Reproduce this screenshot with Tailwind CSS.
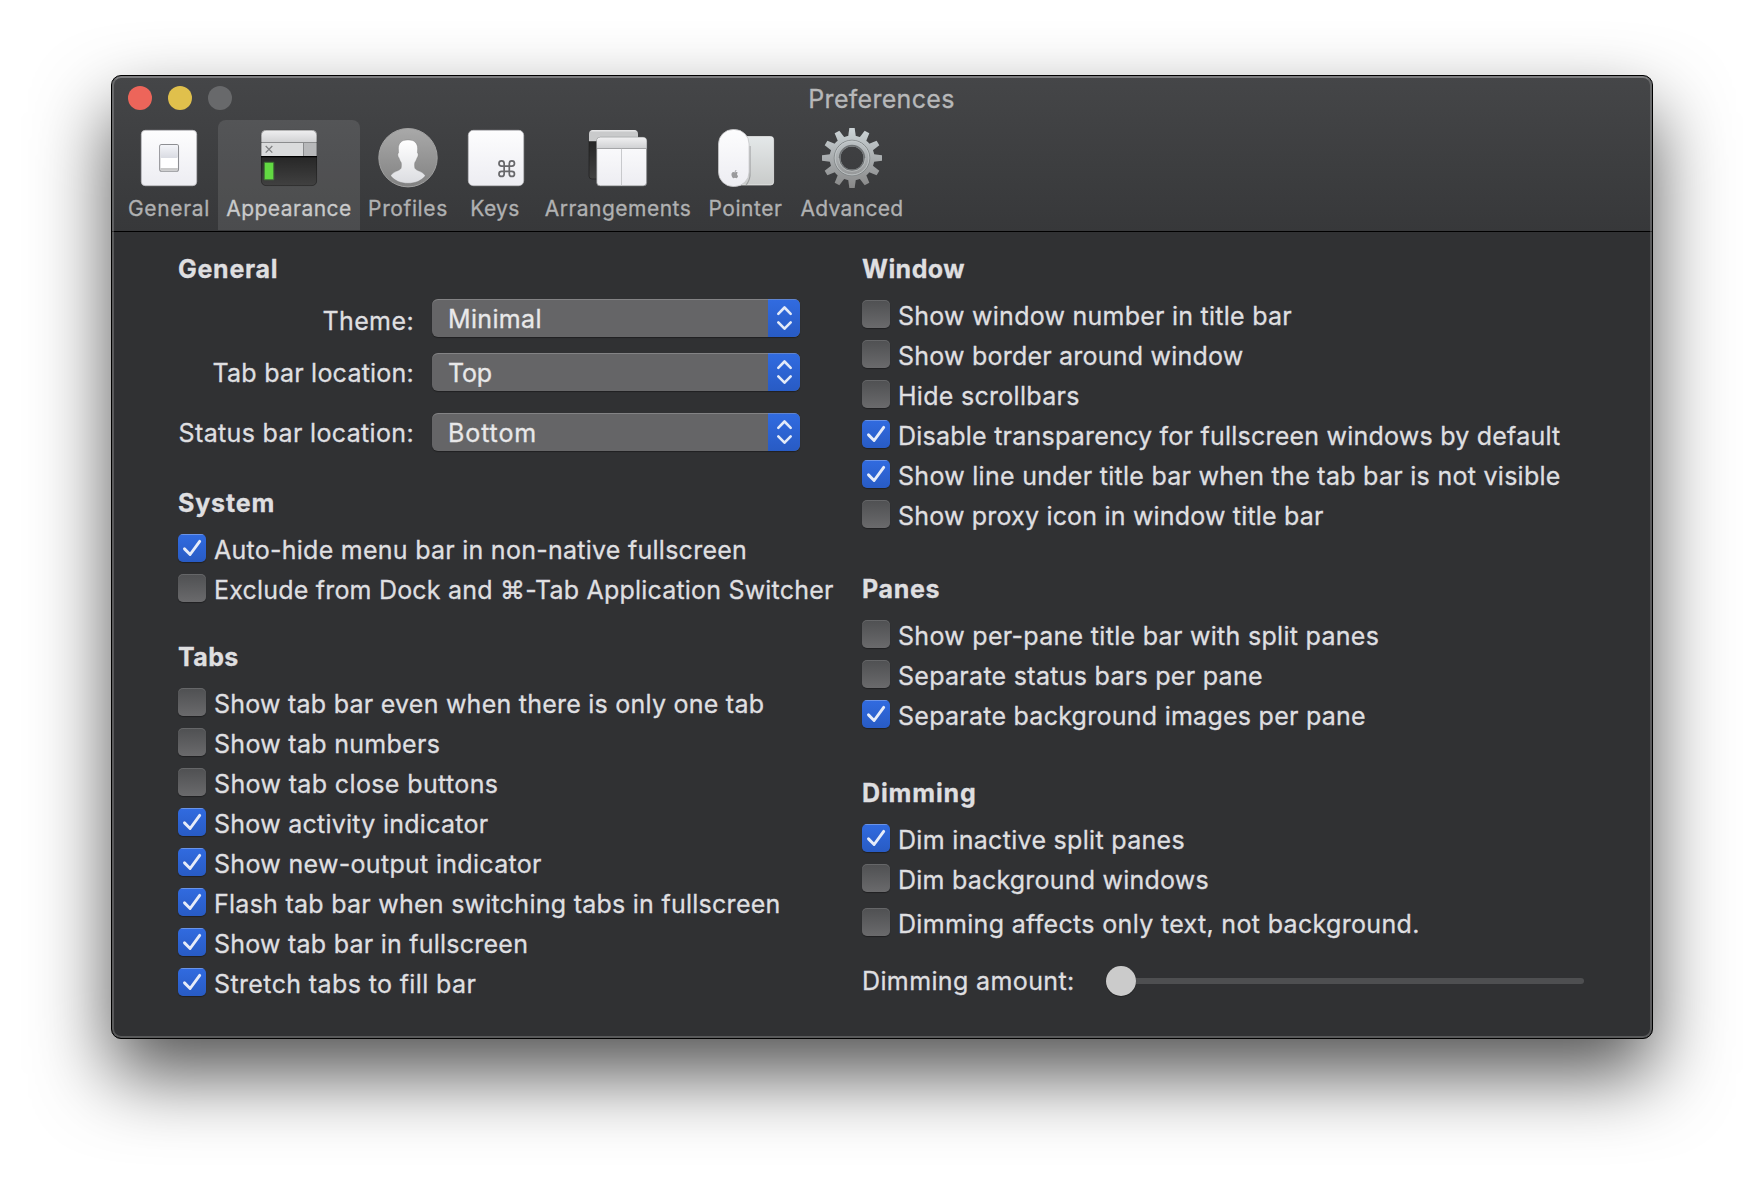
<!DOCTYPE html>
<html lang="en">
<head>
<meta charset="utf-8">
<title>Preferences</title>
<script src="https://cdn.jsdelivr.net/npm/@tailwindcss/browser@4"></script>
</head>
<body class="flex h-[1186px] w-[1764px] items-start overflow-hidden bg-white pt-[75px] pl-[111px] font-[Inter,sans-serif] text-[25px] leading-8 text-[#dfdfe0] [-webkit-text-stroke:0.3px]">

<svg class="hidden">
  <symbol id="on" viewBox="0 0 28 28"><path d="M6.500 14.900l5.600 5.600L21.700 7.300" fill="none" stroke="#e6ecf9" stroke-width="2.900" stroke-linecap="round" stroke-linejoin="round"/></symbol>
  <symbol id="updown" viewBox="0 0 32 38"><path d="M10.300 14.800l6.200-6.300 6.200 6.300M10.300 23.400l6.200 6.300 6.200-6.300" fill="none" stroke="#e3eaf8" stroke-width="2.600" stroke-linecap="round" stroke-linejoin="round"/></symbol>
</svg>

<main class="relative flex h-[964px] w-[1542px] shrink-0 flex-col overflow-hidden rounded-[10px] border border-black bg-[#303133] shadow-[0_36px_76px_rgba(0,0,0,0.67)]">
  <header class="h-[156px] shrink-0 border-b border-black bg-linear-to-b from-[#454648] to-[#37383a]">
    <div class="grid h-11 grid-cols-3 items-center">
      <div class="flex gap-4 pl-4">
        <span class="size-6 rounded-full bg-[#ed655a]"></span>
        <span class="size-6 rounded-full bg-[#e0c04c]"></span>
        <span class="size-6 rounded-full bg-[#68696b]"></span>
      </div>
      <h1 class="-ml-px pt-0.5 text-center tracking-[0.3px] text-[#b7b8b9]">Preferences</h1>
    </div>
    <nav class="flex h-[110px] pl-2 text-[21px] leading-7 whitespace-nowrap text-[#b0b1b2]">
      <div class="flex w-[98px] flex-col items-center gap-[5px] pt-1.5">
        <svg class="size-16 shrink-0" viewBox="0 0 64 64">
          <defs><linearGradient id="plate" x1="0" y1="0" x2="0" y2="1"><stop offset="0" stop-color="#fdfdfe"/><stop offset="1" stop-color="#ededf2"/></linearGradient>
          <linearGradient id="knob" x1="0" y1="0" x2="0" y2="1"><stop offset="0" stop-color="#f4f5f9"/><stop offset="1" stop-color="#d9dbe2"/></linearGradient></defs>
          <rect x="4.300" y="4.300" width="55.400" height="55.400" rx="4" fill="url(#plate)" stroke="#bcbcc0" stroke-width=".7"/>
          <rect x="22.700" y="18.500" width="18.800" height="26.700" rx="2" fill="#fff" stroke="#8d8e92" stroke-width="1.100"/>
          <rect x="23.300" y="19" width="17.600" height="13" rx="1.500" fill="url(#knob)"/>
          <path d="M23.300 42h17.600v1.500a1.200 1.200 0 0 1-1.200 1.200H24.500a1.200 1.200 0 0 1-1.200-1.200z" fill="#c9c9c9"/>
        </svg>
        <span class="tracking-[0.65px]">General</span>
      </div>
      <div class="flex w-[142px] flex-col items-center gap-[5px] rounded-t-lg bg-white/10 pt-1.5 text-[#c9cacb]">
        <svg class="size-16 shrink-0" viewBox="0 0 64 64">
          <defs><linearGradient id="bar" x1="0" y1="0" x2="0" y2="1"><stop offset="0" stop-color="#f0f0f1"/><stop offset="1" stop-color="#d0d1d3"/></linearGradient>
          <linearGradient id="term" x1="0" y1="0" x2="0" y2="1"><stop offset="0" stop-color="#262626"/><stop offset="1" stop-color="#414141"/></linearGradient>
          <clipPath id="win"><rect x="4" y="4" width="56" height="56" rx="5"/></clipPath></defs>
          <g clip-path="url(#win)">
            <path fill="url(#bar)" d="M4 4h56v12.500H4z"/>
            <path fill="#dadbdc" d="M4 16.500h42V30H4z"/>
            <path fill="#b7b8ba" d="M46.500 16.500H60V30H46.500z"/>
            <path fill="#8b8c8e" d="M4 16h56v.9H4zM46 16.500h.9V30H46z"/>
            <path fill="url(#term)" d="M4 30h56v30H4z"/><path fill="#000" d="M4 30h56v1.200H4z"/>
          </g>
          <rect x="4.400" y="4.400" width="55.200" height="55.200" rx="4.600" fill="none" stroke="#000" stroke-opacity=".35" stroke-width=".8"/>
          <path d="M8.700 20l6.600 6.600m0-6.600l-6.600 6.600" stroke="#7f8082" stroke-width="1.300"/>
          <rect x="6.700" y="35.700" width="10.600" height="18.600" rx="1" fill="#54d13a" opacity=".35"/>
          <rect x="7.800" y="36.800" width="8.400" height="16.400" fill="#62d942"/>
        </svg>
        <span class="tracking-[0.47px]">Appearance</span>
      </div>
      <div class="flex w-24 flex-col items-center gap-[5px] pt-1.5">
        <svg class="size-16 shrink-0" viewBox="0 0 64 64">
          <defs><linearGradient id="disc" x1="0" y1="0" x2="0" y2="1"><stop offset="0" stop-color="#a9a9a9"/><stop offset="1" stop-color="#828282"/></linearGradient>
          <linearGradient id="bust" x1="0" y1="0" x2="0" y2="1"><stop offset="0" stop-color="#fff"/><stop offset="1" stop-color="#dcdde1"/></linearGradient></defs>
          <circle cx="32" cy="31.700" r="29.200" fill="url(#disc)" stroke="#a2a2a2" stroke-width="1"/>
          <path d="M32 14c6.200-.3 9.800 3.200 9.600 8.700l-.2 4.300c1.200.3 1 3.200-.4 5-.5 1-.9 2.800-2.100 4.300-.5 1-.5 5 .2 6.300 1.600 2.400 7.800 2.800 10.200 7.200C45.400 54.800 39 57.300 32 57.300S18.600 54.800 14.700 49.800c2.400-4.400 8.600-4.800 10.200-7.200.7-1.300.7-5.300.2-6.300-1.200-1.500-1.600-3.300-2.100-4.300-1.400-1.800-1.600-4.700-.4-5l-.2-4.300C22.200 17.200 25.800 13.700 32 14z" fill="url(#bust)" stroke="#6f6f6f" stroke-opacity=".4" stroke-width=".8"/>
        </svg>
        <span class="tracking-[0.62px]">Profiles</span>
      </div>
      <div class="flex w-20 flex-col items-center gap-[5px] pt-1.5">
        <svg class="size-16 shrink-0" viewBox="0 0 64 64">
          <rect x="4.300" y="4.300" width="55.400" height="55.400" rx="5" fill="url(#plate)" stroke="#bcbcc0" stroke-width=".7"/>
          <path transform="translate(32.400 32.400) scale(.86)" d="M15 6v12a3 3 0 1 0 3-3H6a3 3 0 1 0 3 3V6a3 3 0 1 0-3 3h12a3 3 0 1 0-3-3" fill="none" stroke="#68686b" stroke-width="2"/>
        </svg>
        <span class="-ml-[2px] tracking-[0.36px]">Keys</span>
      </div>
      <div class="flex w-[164px] flex-col items-center gap-[5px] pt-1.5">
        <svg class="size-16 shrink-0" viewBox="0 0 64 64">
          <path d="M3 15h20v38H6a3 3 0 0 1-3-3z" fill="url(#term)" stroke="#1d1d1d" stroke-width=".6"/>
          <path d="M3 15.300V8a4 4 0 0 1 4-4h41a4 4 0 0 1 4 4v7.300z" fill="#c9cacb"/>
          <path d="M4 5.500Q5.200 4 7 4h41q1.900 0 3 1.500z" fill="#e6e6e7"/>
          <rect x="10.700" y="11.300" width="50" height="48.600" rx="3.500" fill="url(#plate)" stroke="#77787a" stroke-width=".7"/>
          <path d="M10.900 22.300V15a3.500 3.500 0 0 1 3.500-3.500h42.600a3.500 3.500 0 0 1 3.500 3.500v7.300z" fill="url(#bar)"/>
          <path d="M10.900 22h49.600v.9H10.900z" fill="#a5a6a8"/><path d="M35 22.800h.9v37H35z" fill="#c3c4c8"/>
        </svg>
        <span class="tracking-[0.49px]">Arrangements</span>
      </div>
      <div class="flex w-[92px] flex-col items-center gap-[5px] pt-1.5">
        <svg class="size-16 shrink-0" viewBox="0 0 64 64">
          <defs><linearGradient id="pad" x1="0" y1="0" x2="0" y2="1"><stop offset="0" stop-color="#e4e8e9"/><stop offset="1" stop-color="#c9cbca"/></linearGradient></defs>
          <rect x="22" y="10.500" width="37.600" height="48.500" rx="3" fill="url(#pad)" stroke="#f0f0f0" stroke-width=".7"/>
          <path d="M36 20v30q-1 6-4 9" fill="none" stroke="#8b8c8d" stroke-width="1.200" opacity=".7"/>
          <rect x="4.500" y="3.500" width="30.600" height="57" rx="14.500" fill="url(#plate)" stroke="#c4c4c6" stroke-width=".8"/>
          <path transform="translate(16.700 44) scale(.34)" fill="#9a9a9c" d="M12.152 6.896c-.948 0-2.415-1.078-3.960-1.040-2.040.027-3.910 1.183-4.961 3.014-2.117 3.675-.546 9.103 1.519 12.090 1.013 1.454 2.208 3.090 3.792 3.039 1.520-.065 2.090-.987 3.935-.987 1.831 0 2.350.987 3.960.948 1.637-.026 2.676-1.480 3.676-2.948 1.156-1.688 1.636-3.325 1.662-3.415-.039-.013-3.182-1.221-3.220-4.857-.026-3.040 2.480-4.494 2.597-4.559-1.429-2.090-3.623-2.324-4.390-2.376-2-.156-3.675 1.090-4.610 1.090zM15.530 3.830c.843-1.012 1.400-2.427 1.245-3.830-1.207.052-2.662.805-3.532 1.818-.780.896-1.454 2.338-1.273 3.714 1.338.104 2.715-.688 3.559-1.701"/>
        </svg>
        <span class="-ml-px tracking-[0.55px]">Pointer</span>
      </div>
      <div class="flex w-[120px] flex-col items-center gap-[5px] pt-1.5">
        <svg class="size-16 shrink-0" viewBox="-32 -32 64 64">
          <defs>
            <linearGradient id="steel" x1="0" y1="0" x2="0" y2="1"><stop offset="0" stop-color="#cfd7da"/><stop offset=".5" stop-color="#a9adaf"/><stop offset="1" stop-color="#858585"/></linearGradient>
            <mask id="gear" maskUnits="userSpaceOnUse" x="-32" y="-32" width="64" height="64">
              <g fill="#fff">
                <circle r="22.500"/>
                <path d="M-2.700-30h5.400L4-20V20L2.700 30h-5.400L-4 20v-40z"/>
                <path transform="rotate(30)" d="M-2.700-30h5.400L4-20V20L2.700 30h-5.400L-4 20v-40z"/>
                <path transform="rotate(60)" d="M-2.700-30h5.400L4-20V20L2.700 30h-5.400L-4 20v-40z"/>
                <path transform="rotate(90)" d="M-2.700-30h5.400L4-20V20L2.700 30h-5.400L-4 20v-40z"/>
                <path transform="rotate(120)" d="M-2.700-30h5.400L4-20V20L2.700 30h-5.400L-4 20v-40z"/>
                <path transform="rotate(150)" d="M-2.700-30h5.400L4-20V20L2.700 30h-5.400L-4 20v-40z"/>
              </g>
              <circle r="11.500" fill="#000"/>
            </mask>
          </defs>
          <rect x="-32" y="-32" width="64" height="64" fill="url(#steel)" mask="url(#gear)"/>
          <circle r="17.800" fill="none" stroke="#7f8486" stroke-width=".9"/>
          <circle r="16.900" fill="none" stroke="#c7cccd" stroke-width=".8"/>
          <circle r="12.400" fill="none" stroke="#707476" stroke-width="1.700"/>
          <path d="M-13.300 0a13.300 13.300 0 0 0 26.600 0" fill="none" stroke="#c3c6c7" stroke-width=".8"/>
        </svg>
        <span class="tracking-[0.3px]">Advanced</span>
      </div>
    </nav>
  </header>

  <div class="grid grow grid-cols-[684px_1fr] pt-[21px] pl-[66px] tracking-[0.3px] whitespace-nowrap">
    <section>
      <h2 class="font-bold tracking-[0.72px]">General</h2>
      <div class="mt-3.5 flex h-[38px]">
        <span class="w-[236px] pt-1.5 text-right tracking-[0.4px]">Theme:</span>
        <div class="ml-[18px] flex h-[38px] w-[368px] overflow-hidden rounded-md bg-[#656567] shadow-[0_1px_1px_rgba(0,0,0,0.35),inset_0_1px_0_rgba(255,255,255,0.2)]">
          <span class="grow pt-1 pl-4 tracking-[0.33px] text-[#e8e8e9]">Minimal</span>
          <svg class="h-[38px] w-8 border-t border-white/25 bg-linear-to-b from-[#316be0] to-[#285bc4]"><use href="#updown" y="-1" width="32" height="38"/></svg>
        </div>
      </div>
      <div class="mt-4 flex h-[38px]">
        <span class="w-[236px] pt-1 text-right tracking-[0.23px]">Tab bar location:</span>
        <div class="ml-[18px] flex h-[38px] w-[368px] overflow-hidden rounded-md bg-[#656567] shadow-[0_1px_1px_rgba(0,0,0,0.35),inset_0_1px_0_rgba(255,255,255,0.2)]">
          <span class="grow pt-1 pl-4 tracking-[-0.2px] text-[#e8e8e9]">Top</span>
          <svg class="h-[38px] w-8 border-t border-white/25 bg-linear-to-b from-[#316be0] to-[#285bc4]"><use href="#updown" y="-1" width="32" height="38"/></svg>
        </div>
      </div>
      <div class="mt-[22px] flex h-[38px]">
        <span class="w-[236px] pt-1 text-right tracking-[0.35px]">Status bar location:</span>
        <div class="ml-[18px] flex h-[38px] w-[368px] overflow-hidden rounded-md bg-[#656567] shadow-[0_1px_1px_rgba(0,0,0,0.35),inset_0_1px_0_rgba(255,255,255,0.2)]">
          <span class="grow pt-1 pl-4 tracking-[0.9px] text-[#e8e8e9]">Bottom</span>
          <svg class="h-[38px] w-8 border-t border-white/25 bg-linear-to-b from-[#316be0] to-[#285bc4]"><use href="#updown" y="-1" width="32" height="38"/></svg>
        </div>
      </div>

      <h2 class="mt-9 font-bold tracking-[0.85px]">System</h2>
      <div class="mt-[15px]">
        <div class="flex h-10 gap-2"><svg class="size-7 shrink-0 rounded-[5px] bg-linear-to-b from-[#316be0] to-[#285bc4] shadow-[0_1px_1px_rgba(0,0,0,0.35)]"><path d="M2 .5h24" stroke="#fff" stroke-opacity=".28"/><use href="#on"/></svg><span class="tracking-[0.26px]">Auto-hide menu bar in non-native fullscreen</span></div>
        <div class="flex h-10 gap-2"><span class="size-7 shrink-0 rounded-[5px] bg-linear-to-b from-[#4f5052] to-[#6a6a6c] shadow-[0_1px_1px_rgba(0,0,0,0.35),inset_0_1px_0_rgba(255,255,255,0.13)]"></span><span class="tracking-[0.2px]">Exclude from Dock and ⌘-Tab Application Switcher</span></div>
      </div>

      <h2 class="mt-[27px] font-bold tracking-[0.4px]">Tabs</h2>
      <div class="mt-[15px]">
        <div class="flex h-10 gap-2"><span class="size-7 shrink-0 rounded-[5px] bg-linear-to-b from-[#4f5052] to-[#6a6a6c] shadow-[0_1px_1px_rgba(0,0,0,0.35),inset_0_1px_0_rgba(255,255,255,0.13)]"></span><span class="tracking-[0.24px]">Show tab bar even when there is only one tab</span></div>
        <div class="flex h-10 gap-2"><span class="size-7 shrink-0 rounded-[5px] bg-linear-to-b from-[#4f5052] to-[#6a6a6c] shadow-[0_1px_1px_rgba(0,0,0,0.35),inset_0_1px_0_rgba(255,255,255,0.13)]"></span><span class="tracking-[0.29px]">Show tab numbers</span></div>
        <div class="flex h-10 gap-2"><span class="size-7 shrink-0 rounded-[5px] bg-linear-to-b from-[#4f5052] to-[#6a6a6c] shadow-[0_1px_1px_rgba(0,0,0,0.35),inset_0_1px_0_rgba(255,255,255,0.13)]"></span><span class="tracking-[0.37px]">Show tab close buttons</span></div>
        <div class="flex h-10 gap-2"><svg class="size-7 shrink-0 rounded-[5px] bg-linear-to-b from-[#316be0] to-[#285bc4] shadow-[0_1px_1px_rgba(0,0,0,0.35)]"><path d="M2 .5h24" stroke="#fff" stroke-opacity=".28"/><use href="#on"/></svg><span class="tracking-[0.26px]">Show activity indicator</span></div>
        <div class="flex h-10 gap-2"><svg class="size-7 shrink-0 rounded-[5px] bg-linear-to-b from-[#316be0] to-[#285bc4] shadow-[0_1px_1px_rgba(0,0,0,0.35)]"><path d="M2 .5h24" stroke="#fff" stroke-opacity=".28"/><use href="#on"/></svg><span class="tracking-[0.31px]">Show new-output indicator</span></div>
        <div class="flex h-10 gap-2"><svg class="size-7 shrink-0 rounded-[5px] bg-linear-to-b from-[#316be0] to-[#285bc4] shadow-[0_1px_1px_rgba(0,0,0,0.35)]"><path d="M2 .5h24" stroke="#fff" stroke-opacity=".28"/><use href="#on"/></svg><span class="tracking-[0.26px]">Flash tab bar when switching tabs in fullscreen</span></div>
        <div class="flex h-10 gap-2"><svg class="size-7 shrink-0 rounded-[5px] bg-linear-to-b from-[#316be0] to-[#285bc4] shadow-[0_1px_1px_rgba(0,0,0,0.35)]"><path d="M2 .5h24" stroke="#fff" stroke-opacity=".28"/><use href="#on"/></svg><span class="tracking-[0.24px]">Show tab bar in fullscreen</span></div>
        <div class="flex h-10 gap-2"><svg class="size-7 shrink-0 rounded-[5px] bg-linear-to-b from-[#316be0] to-[#285bc4] shadow-[0_1px_1px_rgba(0,0,0,0.35)]"><path d="M2 .5h24" stroke="#fff" stroke-opacity=".28"/><use href="#on"/></svg><span class="tracking-[0.38px]">Stretch tabs to fill bar</span></div>
      </div>
    </section>

    <section>
      <h2 class="font-bold tracking-[0.45px]">Window</h2>
      <div class="mt-[15px]">
        <div class="flex h-10 gap-2"><span class="size-7 shrink-0 rounded-[5px] bg-linear-to-b from-[#4f5052] to-[#6a6a6c] shadow-[0_1px_1px_rgba(0,0,0,0.35),inset_0_1px_0_rgba(255,255,255,0.13)]"></span><span class="tracking-[0.25px]">Show window number in title bar</span></div>
        <div class="flex h-10 gap-2"><span class="size-7 shrink-0 rounded-[5px] bg-linear-to-b from-[#4f5052] to-[#6a6a6c] shadow-[0_1px_1px_rgba(0,0,0,0.35),inset_0_1px_0_rgba(255,255,255,0.13)]"></span><span class="tracking-[0.22px]">Show border around window</span></div>
        <div class="flex h-10 gap-2"><span class="size-7 shrink-0 rounded-[5px] bg-linear-to-b from-[#4f5052] to-[#6a6a6c] shadow-[0_1px_1px_rgba(0,0,0,0.35),inset_0_1px_0_rgba(255,255,255,0.13)]"></span><span class="tracking-[0.29px]">Hide scrollbars</span></div>
        <div class="flex h-10 gap-2"><svg class="size-7 shrink-0 rounded-[5px] bg-linear-to-b from-[#316be0] to-[#285bc4] shadow-[0_1px_1px_rgba(0,0,0,0.35)]"><path d="M2 .5h24" stroke="#fff" stroke-opacity=".28"/><use href="#on"/></svg><span class="tracking-[0.23px]">Disable transparency for fullscreen windows by default</span></div>
        <div class="flex h-10 gap-2"><svg class="size-7 shrink-0 rounded-[5px] bg-linear-to-b from-[#316be0] to-[#285bc4] shadow-[0_1px_1px_rgba(0,0,0,0.35)]"><path d="M2 .5h24" stroke="#fff" stroke-opacity=".28"/><use href="#on"/></svg><span class="tracking-[0.28px]">Show line under title bar when the tab bar is not visible</span></div>
        <div class="flex h-10 gap-2"><span class="size-7 shrink-0 rounded-[5px] bg-linear-to-b from-[#4f5052] to-[#6a6a6c] shadow-[0_1px_1px_rgba(0,0,0,0.35),inset_0_1px_0_rgba(255,255,255,0.13)]"></span><span class="tracking-[0.19px]">Show proxy icon in window title bar</span></div>
      </div>

      <h2 class="mt-[33px] font-bold tracking-[0.66px]">Panes</h2>
      <div class="mt-[15px]">
        <div class="flex h-10 gap-2"><span class="size-7 shrink-0 rounded-[5px] bg-linear-to-b from-[#4f5052] to-[#6a6a6c] shadow-[0_1px_1px_rgba(0,0,0,0.35),inset_0_1px_0_rgba(255,255,255,0.13)]"></span><span class="tracking-[0.3px]">Show per-pane title bar with split panes</span></div>
        <div class="flex h-10 gap-2"><span class="size-7 shrink-0 rounded-[5px] bg-linear-to-b from-[#4f5052] to-[#6a6a6c] shadow-[0_1px_1px_rgba(0,0,0,0.35),inset_0_1px_0_rgba(255,255,255,0.13)]"></span><span class="tracking-[0.29px]">Separate status bars per pane</span></div>
        <div class="flex h-10 gap-2"><svg class="size-7 shrink-0 rounded-[5px] bg-linear-to-b from-[#316be0] to-[#285bc4] shadow-[0_1px_1px_rgba(0,0,0,0.35)]"><path d="M2 .5h24" stroke="#fff" stroke-opacity=".28"/><use href="#on"/></svg><span class="tracking-[0.26px]">Separate background images per pane</span></div>
      </div>

      <h2 class="mt-[37px] font-bold tracking-[0.87px]">Dimming</h2>
      <div class="mt-[15px]">
        <div class="flex h-10 gap-2"><svg class="size-7 shrink-0 rounded-[5px] bg-linear-to-b from-[#316be0] to-[#285bc4] shadow-[0_1px_1px_rgba(0,0,0,0.35)]"><path d="M2 .5h24" stroke="#fff" stroke-opacity=".28"/><use href="#on"/></svg><span class="tracking-[0.31px]">Dim inactive split panes</span></div>
        <div class="flex h-11 gap-2"><span class="size-7 shrink-0 rounded-[5px] bg-linear-to-b from-[#4f5052] to-[#6a6a6c] shadow-[0_1px_1px_rgba(0,0,0,0.35),inset_0_1px_0_rgba(255,255,255,0.13)]"></span><span class="tracking-[0.22px]">Dim background windows</span></div>
        <div class="flex h-10 gap-2"><span class="size-7 shrink-0 rounded-[5px] bg-linear-to-b from-[#4f5052] to-[#6a6a6c] shadow-[0_1px_1px_rgba(0,0,0,0.35),inset_0_1px_0_rgba(255,255,255,0.13)]"></span><span class="tracking-[0.33px]">Dimming affects only text, not background.</span></div>
      </div>

      <div class="mt-[17px] flex h-8 items-center">
        <span class="w-[244px] tracking-[0.38px]">Dimming amount:</span>
        <span class="size-[30px] shrink-0 rounded-full bg-[#cbcbcb] shadow-[0_1px_1px_rgba(0,0,0,0.3)]"></span>
        <span class="h-1.5 w-[448px] rounded-r-full bg-[#4e4f51]"></span>
      </div>
    </section>
  </div>
  <div class="pointer-events-none absolute inset-0 rounded-[9px] border-2 border-white/20 border-t-white/30"></div>
</main>
</body>
</html>
